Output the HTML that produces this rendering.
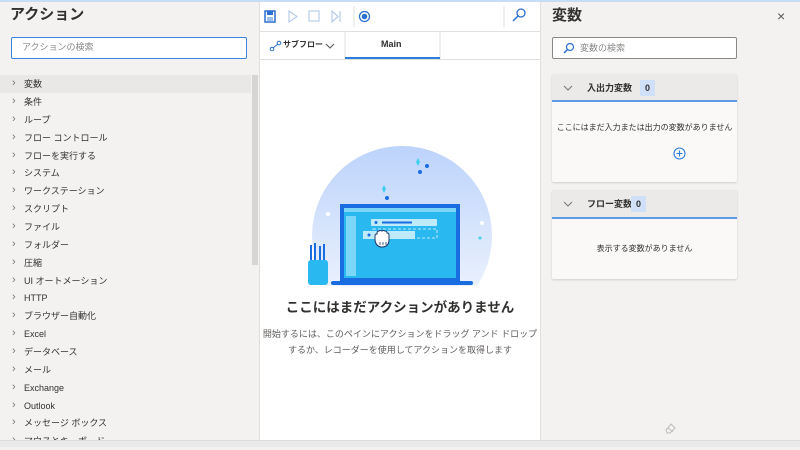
<!DOCTYPE html>
<html><head><meta charset="utf-8"><style>
*{box-sizing:border-box;margin:0;padding:0}
body{width:800px;height:447px;overflow:hidden;background:#f3f2f1;font-family:"Liberation Sans","Noto Sans CJK JP",sans-serif;color:#323130;position:relative}
.abs{position:absolute;line-height:1.2}
.li{position:absolute;left:0;width:250px;height:18px;font-size:9px;line-height:18px;padding-left:24px;color:#323130}
.li:before{content:"›";position:absolute;left:12px;color:#777;font-size:11px;line-height:17px}
</style></head><body>
<div class="abs" style="left:0;top:0;width:800px;height:2px;background:#c7dcf5"></div>
<!-- left -->
<div class="abs" style="left:10px;top:6px;font-size:15px;font-weight:bold">アクション</div>
<div class="abs" style="left:11px;top:37px;width:236px;height:22px;background:#fff;border:1.5px solid #3a86e0;border-radius:2px;font-size:9px;color:#8a8886;line-height:19px;padding-left:10px">アクションの検索</div>
<div class="abs" style="left:0;top:75px;width:251px;height:18px;background:#e9e8e7"></div>
<div class="abs" style="left:252px;top:75px;width:6px;height:190px;background:#d6d5d4"></div>
<div class="li" style="top:75px">変数</div>
<div class="li" style="top:93px">条件</div>
<div class="li" style="top:111px">ループ</div>
<div class="li" style="top:129px">フロー コントロール</div>
<div class="li" style="top:147px">フローを実行する</div>
<div class="li" style="top:164px">システム</div>
<div class="li" style="top:182px">ワークステーション</div>
<div class="li" style="top:200px">スクリプト</div>
<div class="li" style="top:218px">ファイル</div>
<div class="li" style="top:236px">フォルダー</div>
<div class="li" style="top:254px">圧縮</div>
<div class="li" style="top:272px">UI オートメーション</div>
<div class="li" style="top:289px">HTTP</div>
<div class="li" style="top:307px">ブラウザー自動化</div>
<div class="li" style="top:325px">Excel</div>
<div class="li" style="top:343px">データベース</div>
<div class="li" style="top:361px">メール</div>
<div class="li" style="top:379px">Exchange</div>
<div class="li" style="top:397px">Outlook</div>
<div class="li" style="top:414px">メッセージ ボックス</div>
<div class="li" style="top:432px">マウスとキーボード</div>
<!-- middle -->
<div class="abs" style="left:259px;top:2px;width:282px;height:438px;background:#fff;border-left:1px solid #e1dfdd;border-right:1px solid #e1dfdd"></div>
<svg class="abs" style="left:259px;top:2px" width="282" height="58">
<rect x="6" y="9" width="10" height="11" fill="none" stroke="#2b6fd1" stroke-width="1.5"/><rect x="8" y="9" width="6" height="4" fill="#2b6fd1"/><rect x="8" y="15" width="6" height="4" fill="#9fc0ea"/>
<path d="M30 9 L38 14.5 L30 20 Z" fill="none" stroke="#b8cdea" stroke-width="1.2"/>
<rect x="50" y="9" width="10" height="10" fill="none" stroke="#b8cdea" stroke-width="1.2"/>
<path d="M73 9 L79 14.5 L73 20 Z M81 9 V20" fill="none" stroke="#b8cdea" stroke-width="1.2"/>
<line x1="95" y1="4" x2="95" y2="25" stroke="#e1dfdd"/>
<circle cx="105.5" cy="14.5" r="5" fill="none" stroke="#2b6fd1" stroke-width="1.3"/><circle cx="105.5" cy="14.5" r="2.8" fill="#2b6fd1"/>
<line x1="245" y1="4" x2="245" y2="25" stroke="#e1dfdd"/>
<circle cx="262" cy="11" r="4" fill="none" stroke="#2b6fd1" stroke-width="1.3"/><line x1="259" y1="14" x2="254" y2="19" stroke="#2b6fd1" stroke-width="1.5"/>
<line x1="0" y1="29.5" x2="282" y2="29.5" stroke="#e1dfdd"/>
<line x1="86" y1="30" x2="86" y2="57" stroke="#e1dfdd"/>
<line x1="181" y1="30" x2="181" y2="57" stroke="#e1dfdd"/>
<line x1="0" y1="57.5" x2="282" y2="57.5" stroke="#e1dfdd"/>
<line x1="86" y1="56" x2="181" y2="56" stroke="#2b7de0" stroke-width="2"/>
<circle cx="13" cy="47" r="1.8" fill="none" stroke="#2b6fd1"/><circle cx="20" cy="41" r="1.8" fill="none" stroke="#2b6fd1"/><line x1="14" y1="46" x2="19" y2="42" stroke="#2b6fd1"/>
<path d="M67 42 L71 46 L75 42" fill="none" stroke="#555" stroke-width="1"/>
</svg>
<div class="abs" style="left:283px;top:40px;font-size:8px;font-weight:bold">サブフロー</div>
<div class="abs" style="left:381px;top:39px;font-size:9px;font-weight:bold">Main</div>
<svg class="abs" style="left:300px;top:140px" width="200" height="160">
<defs><linearGradient id="g" x1="0" y1="0" x2="0" y2="1"><stop offset="0" stop-color="#bcd3fb"/><stop offset="1" stop-color="#f7f9fe"/></linearGradient>
<clipPath id="c"><rect x="0" y="0" width="200" height="146"/></clipPath></defs>
<circle cx="102" cy="96" r="90" fill="url(#g)" clip-path="url(#c)"/>
<rect x="40" y="64" width="120" height="78" fill="#1a6de0"/>
<rect x="44" y="68" width="112" height="70" fill="#2ab8f0"/>
<rect x="44" y="68" width="112" height="4" fill="#7cd6f7"/>
<rect x="46" y="76" width="10" height="60" fill="#7cd6f7"/>
<rect x="71" y="79" width="66" height="7" rx="1" fill="#bfeafb"/><rect x="82" y="81.5" width="30" height="2" fill="#1a6de0"/><circle cx="76" cy="82.5" r="1.5" fill="#1a6de0"/>
<rect x="63" y="91" width="52" height="8" fill="#bfeafb"/><circle cx="69" cy="95" r="1.5" fill="#1a6de0"/>
<rect x="73" y="89" width="64" height="9" fill="none" stroke="#bfeafb" stroke-dasharray="3 2"/>
<path d="M75 100 v-4 q0-2 2-2 v-1 q0-2 2-2 q1-1 3 0 q1-1 3 0 q2 0 2 2 q2 0 2 2 v6 q-1 6-7 6 q-6 0-7-7z" fill="#fff" stroke="#1d3a6e" stroke-width="1"/>
<path d="M80 102v3M83 102v3M86 102v3" stroke="#1d3a6e" stroke-width=".8"/>
<rect x="31" y="141" width="142" height="4" rx="2" fill="#1a6de0"/>
<rect x="8" y="120" width="20" height="25" rx="3" fill="#2ab8f0"/>
<path d="M11 120 V105 M15 120 V103 M20 120 V106 M24 120 V104" stroke="#1a6de0" stroke-width="2"/>
<path d="M116 22 l2 -4 l2 4 l-2 4z M82 49 l2 -4 l2 4 l-2 4z" fill="#3ed0f0"/>
<circle cx="127" cy="26" r="2" fill="#1a6de0"/><circle cx="120" cy="32" r="2" fill="#1a6de0"/><circle cx="87" cy="58" r="2" fill="#1a6de0"/><circle cx="180" cy="98" r="1.5" fill="#3ed0f0"/><circle cx="182" cy="83" r="2" fill="#fff"/><circle cx="28" cy="74" r="2" fill="#fff"/>
</svg>
<div class="abs" style="left:259px;top:300px;width:282px;text-align:center;font-size:13.5px;font-weight:bold;color:#323130">ここにはまだアクションがありません</div>
<div class="abs" style="left:259px;top:326px;width:282px;text-align:center;font-size:9px;line-height:16px;color:#605e5c">開始するには、このペインにアクションをドラッグ アンド ドロップするか、レコーダーを使用してアクションを取得します</div>
<div class="abs" style="left:0;top:440px;width:800px;height:7px;background:#eaeaea;border-top:1px solid #dcdcdc"></div>
<!-- right -->
<div class="abs" style="left:552px;top:7px;font-size:15px;font-weight:bold">変数</div>
<div class="abs" style="left:777px;top:8px;font-size:14px;color:#555">×</div>
<div class="abs" style="left:552px;top:37px;width:185px;height:22px;background:#fff;border:1px solid #8a8886;border-radius:2px;font-size:9px;color:#8a8886;line-height:20px;padding-left:27px">変数の検索</div>
<svg class="abs" style="left:563px;top:42px" width="12" height="12"><circle cx="7" cy="5" r="3.5" fill="none" stroke="#2b6fd1" stroke-width="1.2"/><line x1="4.5" y1="7.5" x2="1" y2="11" stroke="#2b6fd1" stroke-width="1.4"/></svg>
<div class="abs" style="left:552px;top:74px;width:185px;height:108px;background:#faf9f8;box-shadow:0 1px 2px rgba(0,0,0,.15);border-radius:2px"></div>
<div class="abs" style="left:552px;top:74px;width:185px;height:28px;background:#ebeae9;border-bottom:2px solid #5b9be8"></div>
<svg class="abs" style="left:563px;top:85px" width="10" height="6"><path d="M1 1 L5 5 L9 1" fill="none" stroke="#777"/></svg>
<div class="abs" style="left:587px;top:82px;font-size:9px;line-height:12px;font-weight:bold">入出力変数</div>
<div class="abs" style="left:640px;top:80px;width:15px;height:16px;background:#cfe0f8;font-size:9px;line-height:16px;text-align:center;font-weight:bold">0</div>
<div class="abs" style="left:552px;top:123px;width:185px;text-align:center;font-size:8px;color:#323130">ここにはまだ入力または出力の変数がありません</div>
<svg class="abs" style="left:673px;top:147px" width="13" height="13"><circle cx="6.5" cy="6.5" r="5.5" fill="none" stroke="#2b7de0" stroke-width="1.1"/><path d="M6.5 3.5v6M3.5 6.5h6" stroke="#2b7de0" stroke-width="1.1"/></svg>
<div class="abs" style="left:552px;top:190px;width:185px;height:89px;background:#faf9f8;box-shadow:0 1px 2px rgba(0,0,0,.15);border-radius:2px"></div>
<div class="abs" style="left:552px;top:190px;width:185px;height:29px;background:#ebeae9;border-bottom:2px solid #5b9be8"></div>
<svg class="abs" style="left:563px;top:201px" width="10" height="6"><path d="M1 1 L5 5 L9 1" fill="none" stroke="#777"/></svg>
<div class="abs" style="left:587px;top:198px;font-size:9px;line-height:12px;font-weight:bold">フロー変数</div>
<div class="abs" style="left:631px;top:196px;width:15px;height:16px;background:#cfe0f8;font-size:9px;line-height:16px;text-align:center;font-weight:bold">0</div>
<div class="abs" style="left:552px;top:244px;width:185px;text-align:center;font-size:8px">表示する変数がありません</div>
<svg class="abs" style="left:664px;top:422px" width="12" height="12"><path d="M2 8 L7 2 L11 6 L6 11 L3 11 Z M4 6 L9 10" fill="none" stroke="#bbb"/></svg>
</body></html>
